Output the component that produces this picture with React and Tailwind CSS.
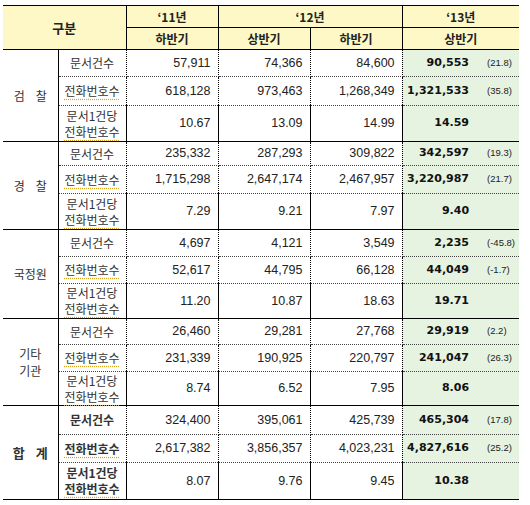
import React from 'react';

const groups = [
  {
    name: ['검', '찰'],
    heights: ['h-[27px]', 'h-[29px]', 'h-[36px]'],
    rows: [
      ['57,911', '74,366', '84,600', '90,553', '(21.8)'],
      ['618,128', '973,463', '1,268,349', '1,321,533', '(35.8)'],
      ['10.67', '13.09', '14.99', '14.59', ''],
    ],
  },
  {
    name: ['경', '찰'],
    heights: ['h-[24px]', 'h-[28px]', 'h-[36px]'],
    rows: [
      ['235,332', '287,293', '309,822', '342,597', '(19.3)'],
      ['1,715,298', '2,647,174', '2,467,957', '3,220,987', '(21.7)'],
      ['7.29', '9.21', '7.97', '9.40', ''],
    ],
  },
  {
    name: ['국정원'],
    heights: ['h-[27px]', 'h-[27px]', 'h-[35px]'],
    rows: [
      ['4,697', '4,121', '3,549', '2,235', '(-45.8)'],
      ['52,617', '44,795', '66,128', '44,049', '(-1.7)'],
      ['11.20', '10.87', '18.63', '19.71', ''],
    ],
  },
  {
    name: ['기타', '기관'],
    stacked: true,
    heights: ['h-[26px]', 'h-[27px]', 'h-[34px]'],
    rows: [
      ['26,460', '29,281', '27,768', '29,919', '(2.2)'],
      ['231,339', '190,925', '220,797', '241,047', '(26.3)'],
      ['8.74', '6.52', '7.95', '8.06', ''],
    ],
  },
  {
    name: ['합', '계'],
    total: true,
    heights: ['h-[29px]', 'h-[28px]', 'h-[37px]'],
    rows: [
      ['324,400', '395,061', '425,739', '465,304', '(17.8)'],
      ['2,617,382', '3,856,357', '4,023,231', '4,827,616', '(25.2)'],
      ['8.07', '9.76', '9.45', '10.38', ''],
    ],
  },
];

const Phone = () => (
  <span className="underline decoration-dotted decoration-[#d9a21b] underline-offset-[3px]">전화번호수</span>
);

const SubLabel = ({ index }) => {
  if (index === 0) return <span>문서건수</span>;
  if (index === 1) return <Phone />;
  return (
    <span className="block leading-[16px]">
      문서1건당
      <br />
      <Phone />
    </span>
  );
};

const CategoryLabel = ({ group }) => {
  if (group.stacked) {
    return (
      <div className="leading-[17px]">
        {group.name[0]}
        <br />
        {group.name[1]}
      </div>
    );
  }
  if (group.name.length === 2) {
    return (
      <div className="flex justify-center gap-[11px]">
        <span>{group.name[0]}</span>
        <span>{group.name[1]}</span>
      </div>
    );
  }
  return <div>{group.name[0]}</div>;
};

export default function App() {
  const font = { fontFamily: '"Liberation Sans", "Noto Sans CJK KR", sans-serif' };
  const kr = '[font-family:"Noto_Sans_CJK_KR",sans-serif]';

  return (
    <div className="w-[530px] h-[505px] bg-white pt-[5px] pl-[3px]" style={font}>
      <table className="w-[516px] table-fixed border-collapse text-[#222]">
        <colgroup>
          <col className="w-[55px]" />
          <col className="w-[68px]" />
          <col className="w-[92px]" />
          <col className="w-[92px]" />
          <col className="w-[92px]" />
          <col className="w-[117px]" />
        </colgroup>
        <thead>
          <tr className="h-[22px] bg-[#fdf8c6]">
            <th
              colSpan={2}
              rowSpan={2}
              className={`${kr} border-t border-b border-r border-black text-[13px] font-bold text-[#222]`}
            >
              구분
            </th>
            <th className={`${kr} border-t border-b border-r border-black text-[12px] font-bold`}>‘11년</th>
            <th colSpan={2} className={`${kr} border-t border-b border-r border-black text-[12px] font-bold`}>‘12년</th>
            <th className={`${kr} border-t border-b border-black text-[12px] font-bold`}>‘13년</th>
          </tr>
          <tr className="h-[22px] bg-[#fdf8c6]">
            <th className={`${kr} border-b border-r border-black text-[12px] font-bold`}>하반기</th>
            <th className={`${kr} border-b border-r border-black text-[12px] font-bold`}>상반기</th>
            <th className={`${kr} border-b border-r border-black text-[12px] font-bold`}>하반기</th>
            <th className={`${kr} border-b border-black text-[12px] font-bold`}>상반기</th>
          </tr>
        </thead>
        <tbody>
          {groups.map((group, gi) =>
            group.rows.map((row, ri) => {
              const last = ri === 2;
              const line = last ? 'border-b border-solid border-black' : 'border-b border-dotted border-[#444]';
              return (
                <tr key={`${gi}-${ri}`} className={group.heights[ri]}>
                  {ri === 0 && (
                    <td
                      rowSpan={3}
                      className={`${kr} border-b border-r border-black text-center text-[12px] text-[#333] ${group.total ? 'font-bold text-[13px] text-[#222]' : ''}`}
                    >
                      <CategoryLabel group={group} />
                    </td>
                  )}
                  <td
                    className={`${kr} ${line} border-r border-r-black border-r-solid text-center text-[12px] text-[#333] ${group.total ? 'font-bold text-[#222]' : ''}`}
                  >
                    <SubLabel index={ri} />
                  </td>
                  {row.slice(0, 3).map((v, ci) => (
                    <td key={ci} className={`${line} border-r border-r-black text-right pr-[7px] text-[12.5px]`}>
                      {v}
                    </td>
                  ))}
                  <td className={`${line} bg-[#e7f3e1] p-0`}>
                    <div className="flex items-center">
                      <span className="flex-1 text-right font-bold text-[11px] text-[#111] [font-family:'DejaVu_Sans',sans-serif]">
                        {row[3]}
                      </span>
                      <span className="w-[50px] pl-[18px] text-[9.5px] text-[#222]">{row[4]}</span>
                    </div>
                  </td>
                </tr>
              );
            })
          )}
        </tbody>
      </table>
    </div>
  );
}
